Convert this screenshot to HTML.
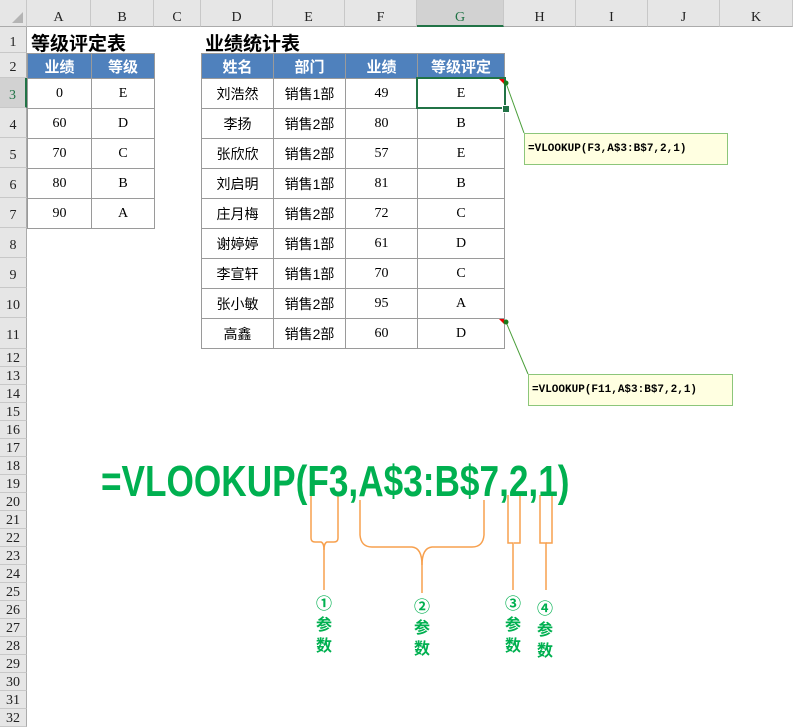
<!DOCTYPE html>
<html><head><meta charset="utf-8"><style>
body{margin:0;width:793px;height:726px;overflow:hidden;background:#fff;position:relative;font-family:"Liberation Sans","Noto Sans CJK SC",sans-serif}
.a{position:absolute}
.ch{position:absolute;top:0;height:27px;background:#e6e6e6;border-right:1px solid #c8c8c8;border-bottom:1px solid #ababab;box-sizing:border-box;text-align:center;line-height:36px;font-family:"Liberation Serif",serif;font-size:14px;color:#222}
.rh{position:absolute;left:0;width:27px;background:#e6e6e6;border-bottom:1px solid #c8c8c8;border-right:1px solid #ababab;box-sizing:border-box;text-align:center;font-family:"Liberation Serif",serif;font-size:14px;color:#222;display:flex;align-items:center;justify-content:center;padding-top:6px}
.s{padding-top:2px}
.c{position:absolute;box-sizing:border-box;border:1px solid #9a9a9a;text-align:center;font-size:14px;color:#000;display:flex;align-items:center;justify-content:center}
.h{background:#4f81bd;color:#fff;font-weight:bold;font-size:15px;border-color:#9a9a9a}
.t{position:absolute;font-weight:bold;font-size:19px;color:#000}
.n{font-family:"Liberation Serif","Noto Serif CJK SC",serif}
.g{position:absolute;color:#00b050;font-weight:bold;font-size:16px;text-align:center;width:30px;line-height:21px}
.box{position:absolute;background:#ffffe1;border:1px solid #8cc67a;font-family:"Liberation Mono",monospace;font-weight:bold;font-size:11px;box-sizing:border-box;padding-left:3px;display:flex;align-items:center}
</style></head><body>
<div class="ch" style="left:0;width:27px"></div>
<svg class="a" style="left:12px;top:12px" width="12" height="12"><polygon points="11,0 11,11 0,11" fill="#b4b4b4"/></svg>
<div class="ch" style="left:27px;width:64px">A</div>
<div class="ch" style="left:91px;width:63px">B</div>
<div class="ch" style="left:154px;width:47px">C</div>
<div class="ch" style="left:201px;width:72px">D</div>
<div class="ch" style="left:273px;width:72px">E</div>
<div class="ch" style="left:345px;width:72px">F</div>
<div class="ch" style="left:417px;width:87px;background:#d2d2d2;color:#217346;border-bottom:2px solid #217346">G</div>
<div class="ch" style="left:504px;width:72px">H</div>
<div class="ch" style="left:576px;width:72px">I</div>
<div class="ch" style="left:648px;width:72px">J</div>
<div class="ch" style="left:720px;width:73px">K</div>
<div class="rh" style="top:27px;height:26px">1</div>
<div class="rh" style="top:53px;height:25px">2</div>
<div class="rh" style="top:78px;height:30px;background:#d2d2d2;color:#217346;border-right:2px solid #217346">3</div>
<div class="rh" style="top:108px;height:30px">4</div>
<div class="rh" style="top:138px;height:30px">5</div>
<div class="rh" style="top:168px;height:30px">6</div>
<div class="rh" style="top:198px;height:30px">7</div>
<div class="rh" style="top:228px;height:30px">8</div>
<div class="rh" style="top:258px;height:30px">9</div>
<div class="rh" style="top:288px;height:30px">10</div>
<div class="rh" style="top:318px;height:31px">11</div>
<div class="rh s" style="top:349px;height:18px">12</div>
<div class="rh s" style="top:367px;height:18px">13</div>
<div class="rh s" style="top:385px;height:18px">14</div>
<div class="rh s" style="top:403px;height:18px">15</div>
<div class="rh s" style="top:421px;height:18px">16</div>
<div class="rh s" style="top:439px;height:18px">17</div>
<div class="rh s" style="top:457px;height:18px">18</div>
<div class="rh s" style="top:475px;height:18px">19</div>
<div class="rh s" style="top:493px;height:18px">20</div>
<div class="rh s" style="top:511px;height:18px">21</div>
<div class="rh s" style="top:529px;height:18px">22</div>
<div class="rh s" style="top:547px;height:18px">23</div>
<div class="rh s" style="top:565px;height:18px">24</div>
<div class="rh s" style="top:583px;height:18px">25</div>
<div class="rh s" style="top:601px;height:18px">26</div>
<div class="rh s" style="top:619px;height:18px">27</div>
<div class="rh s" style="top:637px;height:18px">28</div>
<div class="rh s" style="top:655px;height:18px">29</div>
<div class="rh s" style="top:673px;height:18px">30</div>
<div class="rh s" style="top:691px;height:18px">31</div>
<div class="rh s" style="top:709px;height:18px">32</div>

<div class="t" style="left:31px;top:29px">等级评定表</div>
<div class="t" style="left:205px;top:29px">业绩统计表</div>

<div class="c h" style="left:27px;top:53px;width:65px;height:26px">业绩</div>
<div class="c h" style="left:91px;top:53px;width:64px;height:26px">等级</div>
<div class="c n" style="left:27px;top:78px;width:65px;height:31px">0</div><div class="c n" style="left:91px;top:78px;width:64px;height:31px">E</div>
<div class="c n" style="left:27px;top:108px;width:65px;height:31px">60</div><div class="c n" style="left:91px;top:108px;width:64px;height:31px">D</div>
<div class="c n" style="left:27px;top:138px;width:65px;height:31px">70</div><div class="c n" style="left:91px;top:138px;width:64px;height:31px">C</div>
<div class="c n" style="left:27px;top:168px;width:65px;height:31px">80</div><div class="c n" style="left:91px;top:168px;width:64px;height:31px">B</div>
<div class="c n" style="left:27px;top:198px;width:65px;height:31px">90</div><div class="c n" style="left:91px;top:198px;width:64px;height:31px">A</div>

<div class="c h" style="left:201px;top:53px;width:73px;height:26px">姓名</div>
<div class="c h" style="left:273px;top:53px;width:73px;height:26px">部门</div>
<div class="c h" style="left:345px;top:53px;width:73px;height:26px">业绩</div>
<div class="c h" style="left:417px;top:53px;width:88px;height:26px">等级评定</div>

<div class="c" style="left:201px;top:78px;width:73px;height:31px">刘浩然</div><div class="c" style="left:273px;top:78px;width:73px;height:31px">销售1部</div><div class="c n" style="left:345px;top:78px;width:73px;height:31px">49</div><div class="c n" style="left:417px;top:78px;width:88px;height:31px">E</div>
<div class="c" style="left:201px;top:108px;width:73px;height:31px">李扬</div><div class="c" style="left:273px;top:108px;width:73px;height:31px">销售2部</div><div class="c n" style="left:345px;top:108px;width:73px;height:31px">80</div><div class="c n" style="left:417px;top:108px;width:88px;height:31px">B</div>
<div class="c" style="left:201px;top:138px;width:73px;height:31px">张欣欣</div><div class="c" style="left:273px;top:138px;width:73px;height:31px">销售2部</div><div class="c n" style="left:345px;top:138px;width:73px;height:31px">57</div><div class="c n" style="left:417px;top:138px;width:88px;height:31px">E</div>
<div class="c" style="left:201px;top:168px;width:73px;height:31px">刘启明</div><div class="c" style="left:273px;top:168px;width:73px;height:31px">销售1部</div><div class="c n" style="left:345px;top:168px;width:73px;height:31px">81</div><div class="c n" style="left:417px;top:168px;width:88px;height:31px">B</div>
<div class="c" style="left:201px;top:198px;width:73px;height:31px">庄月梅</div><div class="c" style="left:273px;top:198px;width:73px;height:31px">销售2部</div><div class="c n" style="left:345px;top:198px;width:73px;height:31px">72</div><div class="c n" style="left:417px;top:198px;width:88px;height:31px">C</div>
<div class="c" style="left:201px;top:228px;width:73px;height:31px">谢婷婷</div><div class="c" style="left:273px;top:228px;width:73px;height:31px">销售1部</div><div class="c n" style="left:345px;top:228px;width:73px;height:31px">61</div><div class="c n" style="left:417px;top:228px;width:88px;height:31px">D</div>
<div class="c" style="left:201px;top:258px;width:73px;height:31px">李宣轩</div><div class="c" style="left:273px;top:258px;width:73px;height:31px">销售1部</div><div class="c n" style="left:345px;top:258px;width:73px;height:31px">70</div><div class="c n" style="left:417px;top:258px;width:88px;height:31px">C</div>
<div class="c" style="left:201px;top:288px;width:73px;height:31px">张小敏</div><div class="c" style="left:273px;top:288px;width:73px;height:31px">销售2部</div><div class="c n" style="left:345px;top:288px;width:73px;height:31px">95</div><div class="c n" style="left:417px;top:288px;width:88px;height:31px">A</div>
<div class="c" style="left:201px;top:318px;width:73px;height:31px">高鑫</div><div class="c" style="left:273px;top:318px;width:73px;height:31px">销售2部</div><div class="c n" style="left:345px;top:318px;width:73px;height:31px">60</div><div class="c n" style="left:417px;top:318px;width:88px;height:31px">D</div>

<div class="a" style="left:416px;top:77px;width:90px;height:32px;border:2px solid #217346;box-sizing:border-box"></div>
<div class="a" style="left:502px;top:105px;width:6px;height:6px;background:#217346;border:1px solid #fff"></div>

<svg class="a" style="left:0;top:0" width="793" height="726">
<polygon points="499,79 504,79 504,84" fill="#e00"/>
<polygon points="499,319 504,319 504,324" fill="#e00"/>
<line x1="506" y1="83" x2="524" y2="133" stroke="#4a9e3a" stroke-width="1"/>
<circle cx="506" cy="83" r="2.5" fill="#1a7a1a"/>
<line x1="506" y1="322" x2="528" y2="374" stroke="#4a9e3a" stroke-width="1"/>
<circle cx="506" cy="322" r="2.5" fill="#1a7a1a"/>
<g stroke="#f7a04e" stroke-width="1.5" fill="none">
<path d="M311,495 L311,538 Q311,542 315,542 L321,542 Q324,543 324,550 L324,590"/>
<path d="M338,495 L338,538 Q338,542 334,542 L327,542 Q324,543 324,550"/>
<path d="M360,500 L360,535 Q361,547 372,547 L412,547 Q422,548 422,565 L422,593"/>
<path d="M484,500 L484,535 Q483,547 472,547 L432,547 Q422,548 422,565"/>
<path d="M508,495 L508,543 L513,543 L513,590"/>
<path d="M520,495 L520,543 L514,543"/>
<path d="M540,495 L540,543 L546,543 L546,590"/>
<path d="M552,495 L552,543 L546,543"/>
</g>
</svg>

<div class="box" style="left:524px;top:133px;width:204px;height:32px">=VLOOKUP(F3,A$3:B$7,2,1)</div>
<div class="box" style="left:528px;top:374px;width:205px;height:32px">=VLOOKUP(F11,A$3:B$7,2,1)</div>

<div class="a" style="left:101px;top:455px;font-size:44px;font-weight:bold;color:#00b050;transform:scaleX(0.8);transform-origin:0 0;white-space:nowrap;line-height:54px">=VLOOKUP(F3,A$3:B$7,2,1)</div>

<div class="g" style="left:309px;top:594px">①<br>参<br>数</div>
<div class="g" style="left:407px;top:597px">②<br>参<br>数</div>
<div class="g" style="left:498px;top:594px">③<br>参<br>数</div>
<div class="g" style="left:530px;top:599px">④<br>参<br>数</div>
</body></html>
